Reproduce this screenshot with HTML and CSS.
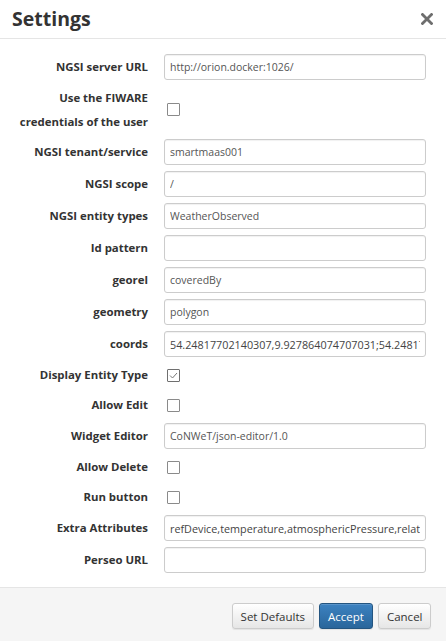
FILE: index.html
```html
<!DOCTYPE html>
<html lang="en">
<head>
<meta charset="utf-8">
<title>Settings</title>
<link rel="stylesheet" href="styles.css">
</head>
<body>
<div class="modal">
  <div class="modal-header">
    <h4 class="modal-title">Settings</h4>
    <span class="close" aria-label="Close">
      <svg width="12" height="12" viewBox="0 0 12 12"><path d="M1.5 1.5 L10.5 10.5 M10.5 1.5 L1.5 10.5" stroke="#6e6e6e" stroke-width="2.8" stroke-linecap="square"/></svg>
    </span>
  </div>
  <div class="modal-body">
    <form class="form">
      <label class="lbl">NGSI server URL</label>
      <input class="field" type="text" value="http://orion.docker:1026/">

      <label class="lbl lbl-two">Use the FIWARE<br>credentials of the user</label>
      <div class="check-cell"><span class="check"></span></div>

      <label class="lbl">NGSI tenant/service</label>
      <input class="field" type="text" value="smartmaas001">

      <label class="lbl">NGSI scope</label>
      <input class="field" type="text" value="/">

      <label class="lbl">NGSI entity types</label>
      <input class="field" type="text" value="WeatherObserved">

      <label class="lbl">Id pattern</label>
      <input class="field" type="text" value="">

      <label class="lbl">georel</label>
      <input class="field" type="text" value="coveredBy">

      <label class="lbl">geometry</label>
      <input class="field" type="text" value="polygon">

      <label class="lbl">coords</label>
      <input class="field field-dark" type="text" value="54.24817702140307,9.927864074707031;54.24817702140307,10.1">

      <label class="lbl lbl-check">Display Entity Type</label>
      <div class="check-cell"><span class="check checked"><svg width="11" height="11" viewBox="0 0 11 11"><path d="M2 5.5 L4.5 8 L9 3" fill="none" stroke="#777" stroke-width="1"/></svg></span></div>

      <label class="lbl lbl-check">Allow Edit</label>
      <div class="check-cell"><span class="check"></span></div>

      <label class="lbl">Widget Editor</label>
      <input class="field" type="text" value="CoNWeT/json-editor/1.0">

      <label class="lbl lbl-check">Allow Delete</label>
      <div class="check-cell"><span class="check"></span></div>

      <label class="lbl lbl-check">Run button</label>
      <div class="check-cell"><span class="check"></span></div>

      <label class="lbl">Extra Attributes</label>
      <input class="field field-dark" type="text" value="refDevice,temperature,atmosphericPressure,relativeHumidity">

      <label class="lbl">Perseo URL</label>
      <input class="field" type="text" value="">
    </form>
  </div>
  <div class="modal-footer">
    <button class="btn btn-default" type="button">Set Defaults</button>
    <button class="btn btn-primary" type="button">Accept</button>
    <button class="btn btn-default" type="button">Cancel</button>
  </div>
</div>
</body>
</html>
```
FILE: styles.css
```css
html, body {
  margin: 0;
  padding: 0;
  background: #ffffff;
}
body {
  font-family: "Open Sans", "DejaVu Sans", sans-serif;
  color: #333333;
  width: 446px;
  height: 641px;
  overflow: hidden;
}
.modal {
  display: flex;
  flex-direction: column;
  height: 641px;
  background: #ffffff;
}
.modal-header {
  height: 38px;
  border-bottom: 1px solid #e5e5e5;
  display: flex;
  align-items: center;
  justify-content: space-between;
  padding: 0 14px 0 12px;
  box-sizing: content-box;
}
.modal-title {
  margin: 0;
  font-size: 19.5px;
  font-weight: 700;
  color: #333333;
  line-height: 36px;
}
.close {
  display: flex;
  width: 12px;
  height: 12px;
  margin-right: -1px;
}
.modal-body {
  padding: 15px 20px 14px 0;
  flex: 0 0 auto;
}
.form {
  display: grid;
  grid-template-columns: 148px 1fr;
  column-gap: 16px;
  row-gap: 6px;
  margin: 0;
}
.lbl {
  text-align: right;
  font-weight: 700;
  font-size: 11.4px;
  color: #333333;
  height: 26px;
  line-height: 26px;
  white-space: nowrap;
}
.lbl-two {
  height: 47px;
  line-height: 23.5px;
}
.lbl-check {
  height: 24px;
  line-height: 24px;
}
.field {
  height: 26px;
  box-sizing: border-box;
  border: 1px solid #cccccc;
  border-radius: 3px;
  box-shadow: inset 0 1px 1px rgba(0, 0, 0, 0.06);
  padding: 0 5px;
  font-family: "Open Sans", "DejaVu Sans", sans-serif;
  font-size: 10.5px;
  color: #555555;
  background: #ffffff;
  width: 100%;
  margin: 0;
  outline: none;
}
.field-dark {
  color: #444444;
  font-size: 10.8px;
}
.check-cell {
  display: flex;
  align-items: center;
  padding-left: 3px;
}
.check {
  width: 13px;
  height: 13px;
  box-sizing: border-box;
  border: 1px solid #8a8a8a;
  border-radius: 1px;
  background: #ffffff;
  display: flex;
  align-items: center;
  justify-content: center;
}
.check.checked {
  border-color: #6f6f6f;
}
.modal-footer {
  flex: 1 1 auto;
  background: #f5f5f5;
  border-top: 1px solid #e5e5e5;
  padding: 15px 15px 0 0;
  display: flex;
  justify-content: flex-end;
  align-items: flex-start;
  gap: 5px;
}
.btn {
  height: 26px;
  box-sizing: border-box;
  font-family: "Open Sans", "DejaVu Sans", sans-serif;
  font-size: 11.5px;
  border-radius: 3px;
  padding: 0 7.5px;
  margin: 0;
  cursor: pointer;
  box-shadow: inset 0 1px 0 rgba(255, 255, 255, 0.15), 0 1px 1px rgba(0, 0, 0, 0.075);
}
.btn-default {
  color: #333333;
  border: 1px solid #cccccc;
  background: linear-gradient(to bottom, #ffffff 0%, #e6e6e6 100%);
}
.btn-primary {
  color: #ffffff;
  border: 1px solid #245580;
  background: linear-gradient(to bottom, #3c82c1 0%, #2a669b 100%);
  padding: 0 8.5px;
}
```
